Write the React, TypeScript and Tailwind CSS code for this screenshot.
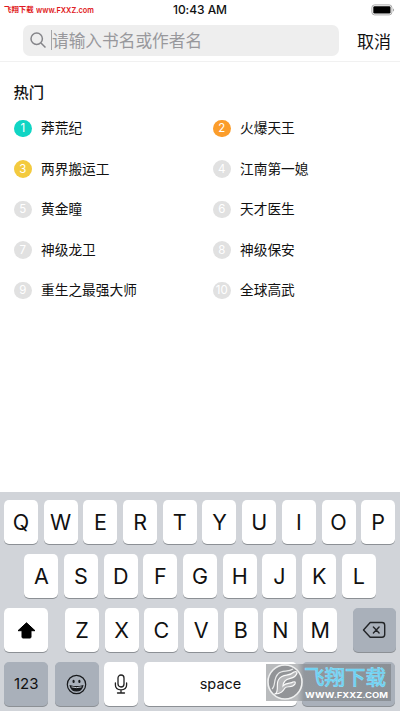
import React from 'react';

const books = ['莽荒纪', '火爆天王', '两界搬运工', '江南第一媳', '黄金瞳', '天才医生', '神级龙卫', '神级保安', '重生之最强大师', '全球高武'];
const badgeColors = ['bg-[#10d5c4]', 'bg-[#fb9d2b]', 'bg-[#f3ca3e]'];

function Key({ children, className = 'w-[34px] bg-white pt-px' }: { children?: React.ReactNode; className?: string }) {
  return (
    <div className={`flex h-[43.5px] shrink-0 items-center justify-center rounded-[5px] text-[21.5px] text-[#111] shadow-[0_1px_0_#8c9095] ${className}`}>
      {children}
    </div>
  );
}

function Letters({ value }: { value: string }) {
  return (
    <div className="flex gap-[5.7px]">
      {value.split('').map((c) => <Key key={c}>{c}</Key>)}
    </div>
  );
}

function Watermark() {
  return (
    <div className="absolute left-[266px] top-[664px] flex h-[37px] w-[125px] items-center bg-[linear-gradient(90deg,#b9bbbd_0,#b9bbbd_31px,#92979d_38px,#8b9096_100%)]">
      <svg className="ml-px h-[37px] w-[37px] shrink-0" viewBox="0 0 37 37">
        <circle cx="18" cy="18" r="17" fill="#929497" stroke="#eff0f0" strokeWidth="1.6" />
        <path d="M8 30C13 27 8 20 12 15C16 9 22 13 27 8Q30 7 30 9C28 16 21 13 18 17Q16 19 16 22C19 18 24 20 26 18Q29 17 28 20C25 25 20 21 18 24C16 27 14 30 8 30Z" fill="#b5b6b8" stroke="#fafafa" strokeWidth="1.2" />
        <path d="M5 25C9 22 6 15 11 10C15 5 21 9 26 5" fill="none" stroke="#e9eaea" strokeWidth="1.2" />
      </svg>
      <div className="flex flex-col items-start">
        <div className="h-[23px] whitespace-nowrap text-[20.5px] font-medium leading-[22px] text-[#69cff1] [-webkit-text-stroke:0.6px_#8bdef8]">飞翔下载</div>
        <svg className="ml-[1px] h-[9px] w-[86px]" viewBox="0 0 86 9">
          <text x="0" y="7.5" textLength="83" lengthAdjust="spacingAndGlyphs" fill="white" fontSize="8" fontWeight="700">WWW.FXXZ.COM</text>
        </svg>
      </div>
    </div>
  );
}

export default function App() {
  return (
    <div className="relative flex h-[711px] w-[400px] flex-col overflow-hidden bg-white font-[Inter,'Noto_Sans_CJK_SC',sans-serif] text-[#111]">
      <header className="h-[62px] border-b border-[#f1f1f1]">
        <div className="grid h-5 grid-cols-3 items-center">
          <div className="flex items-center gap-[2px] whitespace-nowrap pl-[4px] text-[7.4px] font-bold leading-5 text-[#df1821]">
            <span>飞翔下载</span>
            <svg className="h-[12px] w-[66px]" viewBox="0 0 66 12">
              <text x="0" y="9" textLength="58" lengthAdjust="spacingAndGlyphs" fill="#df1821" fontSize="8" fontWeight="600">www.FXXZ.com</text>
            </svg>
          </div>
          <div className="text-center text-[12px] font-medium leading-5 tracking-[-0.05px]">10:43 AM</div>
          <svg className="mr-[5px] h-3 w-6 justify-self-end" viewBox="0 0 24 12">
            <rect x=".9" y=".9" width="20" height="10" rx="2.7" fill="white" stroke="#aaa" />
            <rect x="2.3" y="2.3" width="17.2" height="7.2" rx="1.2" />
            <path d="M22.2 4.3q1.7 1.7 0 3.4z" fill="#777" />
          </svg>
        </div>
        <div className="flex h-9 items-center pl-[23px] pt-[5px]">
          <div className="flex h-[31px] w-[316px] shrink-0 items-center rounded-[7px] bg-[#eee] pl-[7px]">
            <svg className="h-[17px] w-[17px]" viewBox="0 0 17 17" fill="none" stroke="#858589" strokeWidth="1.5">
              <circle cx="6.7" cy="6.7" r="5.7" /><path d="m11 11 4.5 4.5" />
            </svg>
            <span className="-mt-px ml-[4px] h-5 w-px bg-[#a5a5a8]" />
            <span className="whitespace-nowrap text-[16.7px] leading-6 text-[#98989c]">请输入书名或作者名</span>
          </div>
          <span className="ml-[18px] mt-[2px] whitespace-nowrap text-[17px] leading-6">取消</span>
        </div>
      </header>

      <main className="h-[430px] pt-[20px]">
        <h2 className="pl-[13.5px] text-[15.3px] font-medium leading-[22px]">热门</h2>
        <div className="mt-[4px] grid grid-cols-2 pl-[14px]">
          {books.map((name, i) => (
            <div key={name} className={`flex h-[40.5px] items-center ${i % 2 ? 'pl-[6px]' : ''}`}>
              <span className={`flex h-[17.5px] w-[17.5px] shrink-0 items-center justify-center rounded-full pt-px text-[11.5px] leading-none text-white ${badgeColors[i] ?? 'bg-[#e1e1e1]'}`}>{i + 1}</span>
              <span className="ml-[9.5px] whitespace-nowrap text-[13.7px] leading-5">{name}</span>
            </div>
          ))}
        </div>
      </main>

      <section className="flex h-[219px] flex-col gap-[10.6px] bg-[#d1d4d9] pl-1 pt-2">
        <Letters value="QWERTYUIOP" />
        <div className="pl-[20.3px]"><Letters value="ASDFGHJKL" /></div>
        <div className="flex">
          <Key className="mr-[17px] w-[44px] bg-white pt-px">
            <svg className="h-[17px] w-[19px]" viewBox="0 0 19 17"><path d="M9.5.8 18 8.7h-4V15q0 1-1 1H6q-1 0-1-1V8.7H1z" fill="#000" stroke="#000" strokeLinejoin="round" /></svg>
          </Key>
          <Letters value="ZXCVBNM" />
          <Key className="ml-[15.5px] w-[43.5px] bg-[#a9b0ba]">
            <svg className="h-[18px] w-[24px]" viewBox="0 0 24 18" fill="none" stroke="#222427" strokeWidth="1.4" strokeLinejoin="round" strokeLinecap="round"><path d="M8.2 1.5H20q2.7 0 2.7 2.7v9.3q0 2.7-2.7 2.7H8.2L1.5 9Zm3.2 4.6 5.7 5.8m0-5.8-5.7 5.8" /></svg>
          </Key>
        </div>
        <div className="flex">
          <Key className="mr-[6.5px] w-[44.3px] bg-[#a9b0ba] pt-px !text-[15px]">123</Key>
          <Key className="mr-[5.5px] w-[44px] bg-[#a9b0ba]">
            <svg className="h-[21px] w-[21px]" viewBox="0 0 21 21" fill="none" stroke="#17191c" strokeWidth="1.2"><circle cx="10.5" cy="10.5" r="9.2" /><ellipse cx="7.6" cy="7.4" rx=".5" ry="1.1" fill="#17191c" /><ellipse cx="13.4" cy="7.4" rx=".5" ry="1.1" fill="#17191c" /><path d="M4.3 11.8q6.2 1.8 12.4 0-1.1 5.2-6.2 5.2t-6.2-5.2Z" fill="#17191c" /><path d="M5.5 12.9q5 1.5 10 0" stroke="#c3c8cf" strokeWidth="1" /></svg>
          </Key>
          <Key className="mr-[5.7px] w-[34px] bg-white">
            <svg className="h-[20px] w-[14px]" viewBox="0 0 14 20" fill="none" stroke="#222" strokeWidth="1.3" strokeLinecap="round"><rect x="4" y="1" width="6" height="12" rx="3" /><path d="M1.4 9v2q0 4.8 5.6 4.8t5.6-4.8V9M7 16v3M3.5 19h7" /></svg>
          </Key>
          <Key className="mr-[5px] w-[153px] bg-white pb-px !text-[14.5px]">space</Key>
          <Key className="w-[93.5px] bg-[#a9b0ba]" />
        </div>
      </section>
      <Watermark />
    </div>
  );
}
